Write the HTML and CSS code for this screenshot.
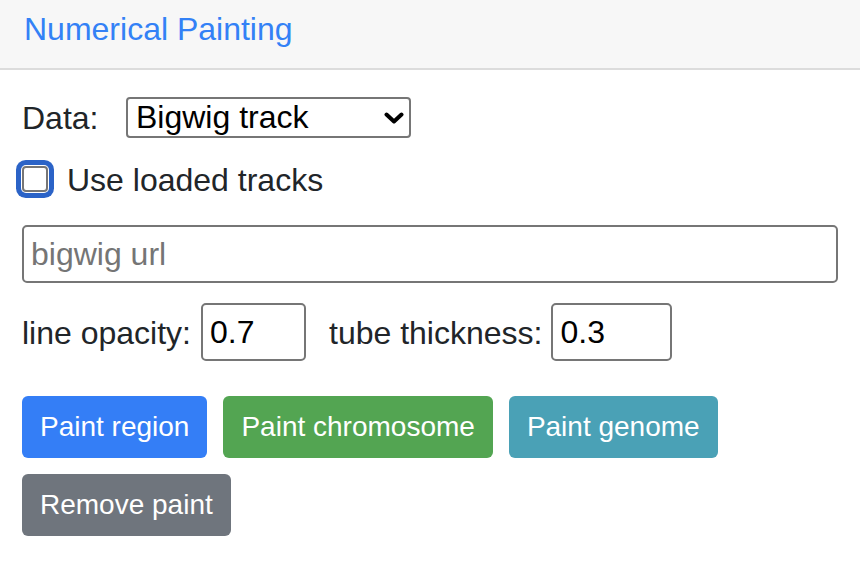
FILE: index.html
```html
<!DOCTYPE html>
<html lang="en">
<head>
<meta charset="utf-8">
<title>Numerical Painting</title>
<link rel="stylesheet" href="styles.css">
</head>
<body>
<div class="card">
  <div class="card-header">
    <div class="card-title">Numerical Painting</div>
  </div>
  <div class="card-body">
    <div class="row row-data">
      <label class="data-label" for="data">Data:</label>
      <div class="select-wrap">
        <select id="data" class="select">
          <option>Bigwig track</option>
        </select>
        <svg class="chevron" width="20" height="12" viewBox="0 0 20 12" aria-hidden="true">
          <path d="M2.5 2.5 L10 9.5 L17.5 2.5" fill="none" stroke="#000" stroke-width="4" stroke-linecap="round" stroke-linejoin="round"/>
        </svg>
      </div>
    </div>
    <div class="row row-check">
      <input type="checkbox" id="loaded" class="check">
      <label for="loaded" class="check-label">Use loaded tracks</label>
    </div>
    <input type="text" class="url-input" placeholder="bigwig url">
    <div class="row row-params">
      <label class="param-label">line opacity:</label>
      <input type="text" class="num-input num-opacity" value="0.7">
      <label class="param-label param-second">tube thickness:</label>
      <input type="text" class="num-input num-thick" value="0.3">
    </div>
    <div class="buttons">
      <button class="btn btn-primary">Paint region</button>
      <button class="btn btn-success">Paint chromosome</button>
      <button class="btn btn-info">Paint genome</button>
      <button class="btn btn-secondary">Remove paint</button>
    </div>
  </div>
</div>
</body>
</html>
```
FILE: styles.css
```css
html, body {
  margin: 0;
  padding: 0;
  background: #ffffff;
}

body {
  font-family: "Liberation Sans", Arial, Helvetica, sans-serif;
  font-size: 32px;
  color: #212529;
}

.card-header {
  height: 68px;
  box-sizing: content-box;
  background: #f7f7f7;
  border-bottom: 2px solid #dcdcdc;
  padding: 0 24px;
}

.card-title {
  padding-top: 11px;
  font-size: 32px;
  line-height: 37px;
  color: #3381f6;
}

.card-body {
  padding: 0 22px;
}

.row {
  display: flex;
  align-items: center;
}

.row-data {
  margin-top: 27px;
  height: 41px;
}

.data-label {
  width: 104px;
  line-height: 37px;
  padding-top: 2px;
}

.select-wrap {
  position: relative;
  width: 285px;
  height: 41px;
}

.select {
  appearance: none;
  -webkit-appearance: none;
  width: 285px;
  height: 41px;
  box-sizing: border-box;
  margin: 0;
  border: 2px solid #767676;
  border-radius: 4px;
  background: #ffffff;
  padding: 0 0 0 8px;
  font-family: "Liberation Sans", Arial, Helvetica, sans-serif;
  font-size: 32px;
  line-height: 37px;
  color: #000000;
}

.chevron {
  position: absolute;
  left: 258px;
  top: 15px;
  pointer-events: none;
}

.row-check {
  margin-top: 24px;
  height: 37px;
  align-items: flex-start;
}

.check {
  appearance: none;
  -webkit-appearance: none;
  width: 26px;
  height: 26px;
  box-sizing: border-box;
  margin: 4px 0 0 0;
  border: 2px solid #767676;
  border-radius: 4px;
  background: #ffffff;
  box-shadow: 0 0 0 1px #ffffff, 0 0 0 6px #2b63c7;
}

.check-label {
  margin-left: 19px;
  line-height: 37px;
}

.url-input {
  display: block;
  margin-top: 26px;
  width: 100%;
  height: 58px;
  box-sizing: border-box;
  border: 2px solid #767676;
  border-radius: 5px;
  padding: 0 7px;
  font-family: "Liberation Sans", Arial, Helvetica, sans-serif;
  font-size: 32px;
  color: #000000;
  outline: none;
}

.url-input::placeholder {
  color: #757575;
}

.row-params {
  margin-top: 20px;
  height: 58px;
}

.param-label {
  line-height: 37px;
  padding-top: 2px;
}

.param-second {
  margin-left: 23px;
}

.num-input {
  height: 58px;
  box-sizing: border-box;
  border: 2px solid #767676;
  border-radius: 5px;
  padding: 0 7px;
  font-family: "Liberation Sans", Arial, Helvetica, sans-serif;
  font-size: 32px;
  color: #000000;
  outline: none;
  margin: 0;
}

.num-opacity {
  width: 105px;
  margin-left: 10px;
}

.num-thick {
  width: 121px;
  margin-left: 9px;
}

.buttons {
  margin-top: 35px;
  display: flex;
  flex-wrap: wrap;
  gap: 16px;
}

.btn {
  height: 62px;
  box-sizing: border-box;
  border: none;
  border-radius: 6px;
  padding: 15px 18px 15px;
  font-family: "Liberation Sans", Arial, Helvetica, sans-serif;
  font-size: 28px;
  line-height: 32px;
  color: #ffffff;
  cursor: pointer;
}

.btn-primary { background: #347ef6; }
.btn-success { background: #53a552; }
.btn-info { background: #4aa1b6; }
.btn-secondary { background: #6f757d; }
```
